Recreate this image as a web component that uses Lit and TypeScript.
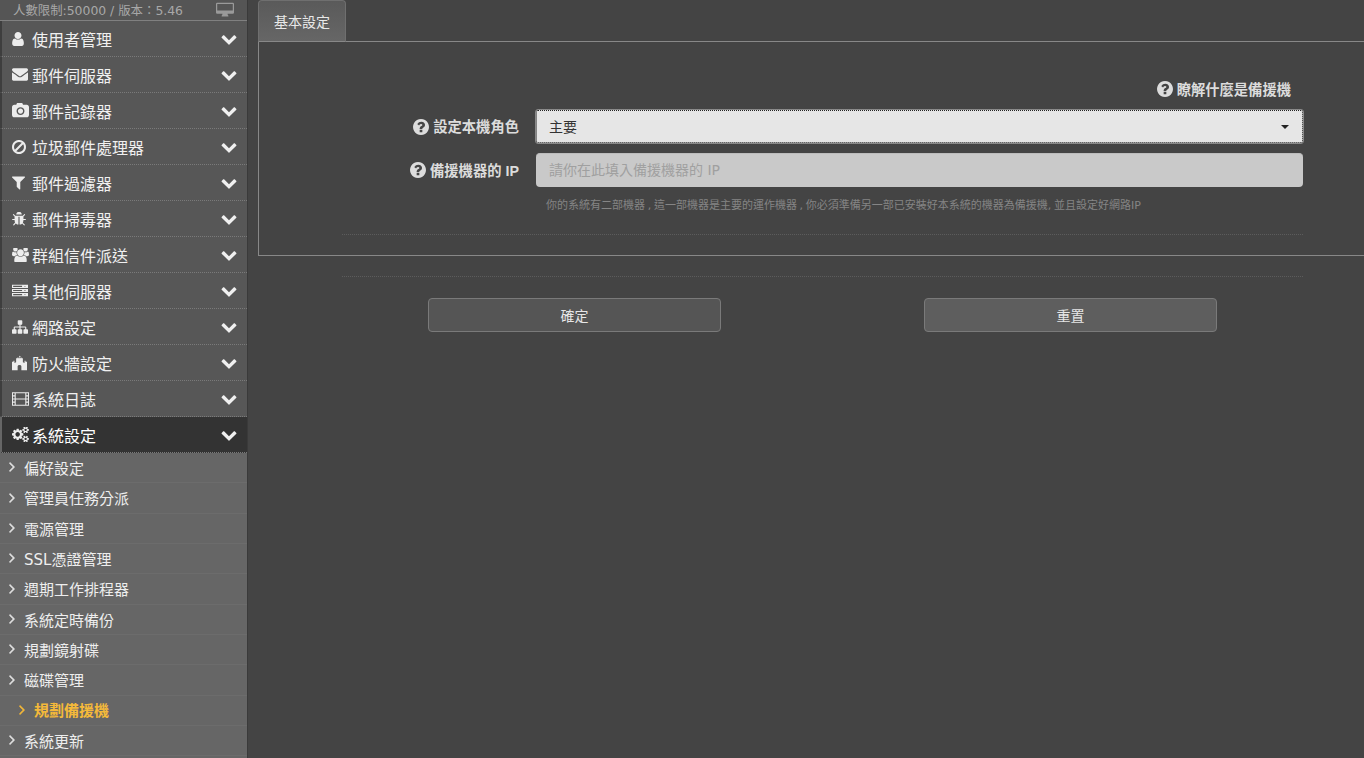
import { LitElement, html, css, svg } from "lit";
import { customElement } from "lit/decorators.js";

const P: Record<string, [string, string]> = {
  user: ["256 128 1280 1536", "M1536 1399q0 109-62.5 187t-150.5 78h-854q-88 0-150.5-78t-62.5-187q0-85 8.5-160.5t31.5-152 58.5-131 94-89 134.5-34.5q131 128 313 128t313-128q76 0 134.5 34.5t94 89 58.5 131 31.5 152 8.5 160.5zm-256-887q0 159-112.5 271.5t-271.5 112.5-271.5-112.5-112.5-271.5 112.5-271.5 271.5-112.5 271.5 112.5 112.5 271.5z"],
  envelope: ["0 256 1792 1408", "M1792 710v794q0 66-47 113t-113 47h-1472q-66 0-113-47t-47-113v-794q44 49 101 87 362 246 497 345 57 42 92.5 65.5t94.5 48 110 24.5h2q51 0 110-24.5t94.5-48 92.5-65.5q170-123 498-345 57-39 100-87zm0-294q0 79-49 151t-122 123q-376 261-468 325-10 7-42.5 30.5t-54 38-52 32.5-57.5 27-50 9h-2q-23 0-50-9t-57.5-27-52-32.5-54-38-42.5-30.5q-91-64-262-182.5t-205-142.5q-62-42-117-115.5t-55-136.5q0-78 41.5-130t118.5-52h1472q65 0 112.5 47t47.5 113z"],
  camera: ["0 120 1920 1544", "M960 672q119 0 203.5 84.5t84.5 203.5-84.5 203.5-203.5 84.5-203.5-84.5-84.5-203.5 84.5-203.5 203.5-84.5zm704-416q106 0 181 75t75 181v896q0 106-75 181t-181 75h-1408q-106 0-181-75t-75-181v-896q0-106 75-181t181-75h224l51-136q19-49 69.5-84.5t103.5-35.5h320q53 0 103.5 35.5t69.5 84.5l51 136h224zm-704 1152q185 0 316.5-131.5t131.5-316.5-131.5-316.5-316.5-131.5-316.5 131.5-131.5 316.5 131.5 316.5 316.5 131.5z"],
  ban: ["128 128 1536 1536", "M1440 893q0-161-87-295l-754 753q137 89 297 89 111 0 211.5-43.5t173.5-116.5 116-174.5 43-212.5zm-999 299l755-754q-135-91-300-91-148 0-273 73t-198 199-73 274q0 162 89 299zm1223-299q0 157-61 300t-163.5 246-245 164-298.5 61-298.5-61-245-164-163.5-246-61-300 61-299.5 163.5-245.5 245-164 298.5-61 298.5 61 245 164 163.5 245.5 61 299.5z"],
  filter: ["0 256 1408 1408", "M1403 295q17 41-14 70l-493 493v742q0 42-39 59-13 5-25 5-27 0-45-19l-256-256q-19-19-19-45v-486l-493-493q-31-29-14-70 17-39 59-39h1280q42 0 59 39z"],
  bug: ["90 128 1612 1536", "M1696 960q0 26-19 45t-45 19h-224q0 171-67 290l208 209q19 19 19 45t-19 45q-18 19-45 19t-45-19l-198-197q-5 5-15 13t-42 28.5-65 36.5-82 29-97 13v-896h-128v896q-51 0-101.5-13.5t-87-33-66-39-43.5-32.5l-15-14-183 207q-20 21-48 21-24 0-43-16-19-18-20.5-44.5t15.5-46.5l202-227q-58-114-58-274h-224q-26 0-45-19t-19-45 19-45 45-19h224v-294l-173-173q-19-19-19-45t19-45 45-19 45 19l173 173h844l173-173q19-19 45-19t45 19 19 45-19 45l-173 173v294h224q26 0 45 19t19 45zm-480-576h-640q0-133 93.5-226.5t226.5-93.5 226.5 93.5 93.5 226.5z"],
  users: ["0 128 1920 1536", "M593 896q-162 5-265 128h-134q-82 0-138-40.5t-56-118.5q0-353 124-353 6 0 43.5 21t97.5 42.5 119 21.5q67 0 133-23-5 37-5 66 0 139 81 256zm1071 637q0 120-73 189.5t-194 69.5h-874q-121 0-194-69.5t-73-189.5q0-53 3.5-103.5t14-109 26.5-108.5 43-97.5 62-81 85.5-53.5 111.5-20q10 0 43 21.5t73 48 107 48 135 21.5 135-21.5 107-48 73-48 43-21.5q61 0 111.5 20t85.5 53.5 62 81 43 97.5 26.5 108.5 14 109 3.5 103.5zm-1024-1277q0 106-75 181t-181 75-181-75-75-181 75-181 181-75 181 75 75 181zm704 384q0 159-112.5 271.5t-271.5 112.5-271.5-112.5-112.5-271.5 112.5-271.5 271.5-112.5 271.5 112.5 112.5 271.5zm576 225q0 78-56 118.5t-138 40.5h-134q-103-123-265-128 81-117 81-256 0-29-5-66 66 23 133 23 59 0 119-21.5t97.5-42.5 43.5-21q124 0 124 353zm-128-609q0 106-75 181t-181 75-181-75-75-181 75-181 181-75 181 75 75 181z"],
  server: ["0 256 1792 1280", "M0 256h1792v352h-1792zM0 720h1792v352h-1792zM0 1184h1792v352h-1792zM128 368v128h1000v-128zM128 832v128h1000v-128zM128 1296v128h1000v-128zM1400 380v104h100v-104zM1400 844v104h100v-104zM1400 1308v104h100v-104z"],
  sitemap: ["0 128 1792 1536", "M1792 1248v320q0 40-28 68t-68 28h-320q-40 0-68-28t-28-68v-320q0-40 28-68t68-28h96v-192h-512v192h96q40 0 68 28t28 68v320q0 40-28 68t-68 28h-320q-40 0-68-28t-28-68v-320q0-40 28-68t68-28h96v-192h-512v192h96q40 0 68 28t28 68v320q0 40-28 68t-68 28h-320q-40 0-68-28t-28-68v-320q0-40 28-68t68-28h96v-192q0-52 38-90t90-38h512v-192h-96q-40 0-68-28t-28-68v-320q0-40 28-68t68-28h320q40 0 68 28t28 68v320q0 40-28 68t-68 28h-96v192h512q52 0 90 38t38 90v192h96q40 0 68 28t28 68z"],
  fort: ["0 40 1792 1720", "M860 40L1080 120L910 190V340H1020V240H1140V340H1300V800L1500 900V640H1620V760H1792V1760H1120V1300Q1120 1150 896 1150Q672 1150 672 1300V1760H0V760H172V640H292V900L492 800V340H650V240H770V340H860Z"],
  film: ["0 128 1920 1536", "M0 128h1920v1536h-1920zM110 240v240h190v-240zM110 600v240h190v-240zM110 950v240h190v-240zM110 1310v240h190v-240zM1620 240v240h190v-240zM1620 600v240h190v-240zM1620 950v240h190v-240zM1620 1310v240h190v-240zM420 240v590h1080v-590zM420 950v600h1080v-600z"],
  cogs: ["0 128 1920 1536", "M896 880q0-106-75-181t-181-75-181 75-75 181 75 181 181 75 181-75 75-181zm768 512q0-52-38-90t-90-38-90 38-38 90q0 53 37.5 90.5t90.5 37.5 90.5-37.5 37.5-90.5zm0-1024q0-52-38-90t-90-38-90 38-38 90q0 53 37.5 90.5t90.5 37.5 90.5-37.5 37.5-90.5zm-384 421v185q0 10-7 19.5t-16 10.5l-155 24q-11 35-32 76 34 48 90 115 7 11 7 20 0 12-7 19-23 30-82.5 89.5t-78.5 59.5q-11 0-21-7l-115-90q-37 19-77 31-11 108-23 155-7 24-30 24h-186q-11 0-20-7.5t-10-17.5l-23-153q-34-10-75-31l-118 89q-7 7-20 7-11 0-21-8-144-133-144-160 0-9 7-19 10-14 41-53t47-61q-23-44-35-82l-152-24q-10-1-17-9.5t-7-19.5v-185q0-10 7-19.5t16-10.5l155-24q11-35 32-76-34-48-90-115-7-11-7-20 0-12 7-20 22-30 82-89t79-59q11 0 21 7l115 90q34-18 77-32 11-108 23-154 7-24 30-24h186q11 0 20 7.5t10 17.5l23 153q34 10 75 31l118-89q8-7 20-7 11 0 21 8 144 133 144 160 0 8-7 19-12 16-42 54t-45 60q23 48 34 82l152 23q10 2 17 10.5t7 19.5zm640 533v140q0 16-149 31-12 27-30 52 51 113 51 138 0 4-4 7-122 71-124 71-8 0-46-47t-52-68q-20 2-30 2t-30-2q-14 21-52 68t-46 47q-2 0-124-71-4-3-4-7 0-25 51-138-18-25-30-52-149-15-149-31v-140q0-16 149-31 13-29 30-52-51-113-51-138 0-4 4-7 4-2 35-20t59-34 30-16q8 0 46 46.5t52 67.5q20-2 30-2t30 2q51-71 92-112l6-2q4 0 124 70 4 3 4 7 0 25-51 138 17 23 30 52 149 15 149 31zm0-1024v140q0 16-149 31-12 27-30 52 51 113 51 138 0 4-4 7-122 71-124 71-8 0-46-47t-52-68q-20 2-30 2t-30-2q-14 21-52 68t-46 47q-2 0-124-71-4-3-4-7 0-25 51-138-18-25-30-52-149-15-149-31v-140q0-16 149-31 13-29 30-52-51-113-51-138 0-4 4-7 4-2 35-20t59-34 30-16q8 0 46 46.5t52 67.5q20-2 30-2t30 2q51-71 92-112l6-2q4 0 124 70 4 3 4 7 0 25-51 138 17 23 30 52 149 15 149 31z"],
  chevron: ["64 300 1664 1290", "M1683 808l-742 741q-19 19-45 19t-45-19l-742-741q-19-19-19-45.5t19-45.5l166-165q19-19 45-19t45 19l531 531 531-531q19-19 45-19t45 19l166 165q19 19 19 45.5t-19 45.5z"],
  angle: ["560 420 650 1070", "M1171 960q0 13-10 23l-466 466q-10 10-23 10t-23-10l-50-50q-10-10-10-23t10-23l393-393-393-393q-10-10-10-23t10-23l50-50q10-10 23-10t23 10l466 466q10 10 10 23z"],
  question: ["128 128 1536 1536", "M1024 1376v-192q0-14-9-23t-23-9h-192q-14 0-23 9t-9 23v192q0 14 9 23t23 9h192q14 0 23-9t9-23zm256-672q0-88-55.5-163t-138.5-116-170-41q-243 0-371 213-15 24 8 42l132 100q7 6 19 6 16 0 25-12 53-68 86-92 34-24 86-24 48 0 85.5 26t37.5 59q0 38-20 61t-68 45q-63 28-115.5 86.5t-52.5 125.5v36q0 14 9 23t23 9h192q14 0 23-9t9-23q0-19 21.5-49.5t54.5-49.5q32-18 49-28.5t46-35 44.5-48 28-60.5 12.5-81zm384 192q0 209-103 385.5t-279.5 279.5-385.5 103-385.5-103-279.5-279.5-103-385.5 103-385.5 279.5-279.5 385.5-103 385.5 103 279.5 279.5 103 385.5z"],
  desktop: ["0 128 1920 1536", "M130 128h1660q130 0 130 130v900q0 130-130 130h-560q0 110 90 210v60q0 40-40 40h-640q-40 0-40-40v-60q90-100 90-210h-560q-130 0-130-130v-900q0-130 130-130zM130 258v700h1660v-700z"],
};

const icon = (n: string, w: number, h: number) => {
  const [vb, d] = P[n];
  return html`<svg class="ic ic-${n}" width=${w} height=${h} viewBox=${vb} fill="currentColor" fill-rule="evenodd" preserveAspectRatio="xMidYMid meet">${svg`<path d=${d}></path>`}</svg>`;
};

const MENU: [string, string, number, number, boolean?][] = [
  ["user", "使用者管理", 12, 14],
  ["envelope", "郵件伺服器", 16, 13],
  ["camera", "郵件記錄器", 17, 15],
  ["ban", "垃圾郵件處理器", 14, 14],
  ["filter", "郵件過濾器", 13, 14],
  ["bug", "郵件掃毒器", 14, 14],
  ["users", "群組信件派送", 17, 14],
  ["server", "其他伺服器", 16, 13],
  ["sitemap", "網路設定", 16, 14],
  ["fort", "防火牆設定", 15, 16],
  ["film", "系統日誌", 17, 14],
  ["cogs", "系統設定", 17, 15, true],
];

const SUB = ["偏好設定", "管理員任務分派", "電源管理", "SSL憑證管理", "週期工作排程器", "系統定時備份", "規劃鏡射碟", "磁碟管理", "規劃備援機", "系統更新"];
const CURRENT = "規劃備援機";

@customElement("app-root")
export class AppRoot extends LitElement {
  static styles = css`
    :host {
      display: block;
      width: 1364px;
      height: 758px;
      overflow: hidden;
      background: #444;
      font-family: "DejaVu Sans", "Noto Sans CJK TC", sans-serif;
      color: #e6e6e6;
    }
    .page { display: flex; height: 758px; }
    .side {
      width: 248px;
      flex: none;
      background: #666;
      box-sizing: border-box;
      border-right: 1px solid #3a3a3a;
    }
    .top {
      height: 21px;
      box-sizing: border-box;
      background: #555;
      border-bottom: 1px solid #808080;
      display: flex;
      justify-content: space-between;
      align-items: center;
      padding: 0 13px;
      font-size: 12.4px;
      color: #a8a8a8;
    }
    .top .ic { color: #9a9a9a; }
    .item {
      height: 36px;
      box-sizing: border-box;
      display: flex;
      align-items: center;
      background: #575757;
      border-left: 2px solid #3e3e3e;
      border-bottom: 1px dotted #7a7a7a;
      padding: 0 10px 0 10px;
      font-size: 16px;
      color: #f0f0f0;
    }
    .item.active { background: #333; border-left-color: #666; color: #fff; }
    .item .slot { width: 20px; display: flex; justify-content: flex-start; flex: none; color: #ececec; }
    .item .name { flex: 1; white-space: nowrap; }
    .item .chev { color: #f0f0f0; display: flex; }
    .sub {
      height: 30.33px;
      box-sizing: border-box;
      display: flex;
      align-items: center;
      padding: 0 0 0.6px 9px;
      font-size: 15px;
      color: #eee;
      background: #666;
      border-bottom: 1px solid #6c6c6c;
      white-space: nowrap;
    }
    .sub .ic { margin-right: 9px; color: #e0e0e0; flex: none; }
    .ic-angle path { stroke: currentColor; stroke-width: 50; }
    .sub.cur { padding-left: 19px; font-weight: 700; color: #f4b93a; }
    .sub.cur .ic { color: #f4b93a; }

    .main { flex: 1; min-width: 0; padding-left: 10px; }
    .tabs { height: 42px; box-sizing: border-box; border-bottom: 1px solid #888; display: flex; }
    .tab {
      width: 88px;
      height: 42px;
      box-sizing: border-box;
      display: flex;
      align-items: center;
      justify-content: center;
      background: linear-gradient(#5a5a5a, #666);
      border: 1px solid #6f6f6f;
      border-bottom: 1px solid #888;
      border-radius: 4px 4px 0 0;
      font-size: 14px;
      color: #e8e8e8;
    }
    .panel {
      height: 214px;
      box-sizing: border-box;
      border-left: 1px solid #888;
      border-bottom: 1px solid #888;
      padding: 37px 61px 0 83px;
    }
    .link {
      display: flex;
      justify-content: flex-end;
      align-items: center;
      gap: 4px;
      height: 20px;
      padding-right: 12px;
      font-family: "Liberation Sans", "Noto Sans CJK TC", sans-serif;
      font-size: 14.3px;
      font-weight: 700;
      color: #dcdcdc;
      margin-bottom: 11px;
    }
    .link span, .label span { padding-bottom: 2px; }
    .row { display: grid; grid-template-columns: 177px 1fr; column-gap: 17px; align-items: center; }
    .row + .row { margin-top: 10px; }
    .label {
      display: flex;
      justify-content: flex-end;
      align-items: center;
      gap: 4px;
      font-family: "Liberation Sans", "Noto Sans CJK TC", sans-serif;
      font-size: 14.3px;
      font-weight: 700;
      color: #dcdcdc;
    }
    .select {
      height: 33px;
      box-sizing: border-box;
      background: #e6e6e6;
      border: 1px dotted #222;
      outline: 1px solid #8a8a8a;
      border-radius: 2px;
      display: flex;
      align-items: center;
      justify-content: space-between;
      padding: 0 13px 2px 12px;
      font-size: 14px;
      color: #333;
    }
    .caret { width: 0; height: 0; margin-top: 2px; border: 4px solid transparent; border-top-color: #222; border-bottom: 0; }
    .input {
      height: 34px;
      width: 100%;
      box-sizing: border-box;
      background: #c9c9c9;
      border: 0;
      border-top: 1px solid #bcbcbc;
      border-radius: 4px;
      padding: 0 13px 1px;
      font: inherit;
      font-size: 14px;
    }
    .input::placeholder { color: #a0a0a0; opacity: 1; }
    .help { margin: 12px 0 0 204px; font-size: 11px; line-height: 14px; color: #858585; white-space: nowrap; word-spacing: -0.8px; }
    .dots { border-top: 1px dotted #5c5c5c; }
    .panel .dots { margin-top: 21px; }
    .after { margin: 20px 61px 0 84px; }
    .btns { display: flex; gap: 203px; margin: 21px 0 0 170px; }
    .btn {
      width: 293px;
      height: 34px;
      box-sizing: border-box;
      background: #555;
      border: 1px solid #7a7a7a;
      border-radius: 4px;
      display: flex;
      align-items: center;
      justify-content: center;
      font-size: 14px;
      color: #e6e6e6;
    }
    .btn.alt { background: #5e5e5e; }
  `;

  render() {
    return html`<div class="page">
      <aside class="side">
        <div class="top"><span>人數限制:50000 / 版本：5.46</span>${icon("desktop", 18, 16)}</div>
        ${MENU.map(([ic, name, w, h, active]) => html`<div class="item ${active ? "active" : ""}">
          <span class="slot">${icon(ic, w, h)}</span><span class="name">${name}</span>
          <span class="chev">${icon("chevron", 16, 12)}</span>
        </div>`)}
        ${SUB.map((s) => html`<div class="sub ${s === CURRENT ? "cur" : ""}">${icon("angle", 6, 10)}<span>${s}</span></div>`)}
      </aside>
      <main class="main">
        <div class="tabs"><div class="tab">基本設定</div></div>
        <section class="panel">
          <div class="link">${icon("question", 16, 16)}<span>瞭解什麼是備援機</span></div>
          <div class="row">
            <div class="label">${icon("question", 16, 16)}<span>設定本機角色</span></div>
            <div class="select"><span>主要</span><span class="caret"></span></div>
          </div>
          <div class="row">
            <div class="label">${icon("question", 16, 16)}<span>備援機器的 IP</span></div>
            <input class="input" disabled placeholder="請你在此填入備援機器的 IP" />
          </div>
          <div class="help">你的系統有二部機器 , 這一部機器是主要的運作機器 , 你必須準備另一部已安裝好本系統的機器為備援機, 並且設定好網路IP</div>
          <div class="dots"></div>
        </section>
        <div class="dots after"></div>
        <div class="btns"><div class="btn">確定</div><div class="btn alt">重置</div></div>
      </main>
    </div>`;
  }
}
